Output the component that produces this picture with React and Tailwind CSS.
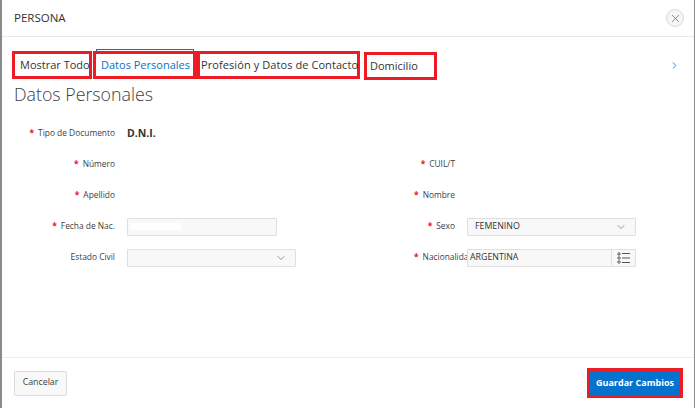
import { ChevronDown, ChevronRight, X } from 'lucide-react';

const Star = () => <span className="text-[#e8132b] font-bold mr-1">*</span>;

const Field = ({ label, required, clipped, children }) => (
  <div className="flex items-center h-[31px]">
    <div className={clipped
      ? 'w-[122px] shrink-0 flex justify-start pl-[69px] overflow-hidden whitespace-nowrap text-[#404040] text-[8.4px]'
      : 'w-[122px] shrink-0 flex justify-end pr-3 whitespace-nowrap text-[#404040] text-[8.4px]'}>
      {required && <Star />}
      <span>{label}</span>
    </div>
    {children}
  </div>
);

const inputBox = 'h-[18px] bg-[#f8f8f8] border border-[#dfdfdf] rounded-[1px] flex items-center';

const ListIcon = () => (
  <svg width="14" height="12" viewBox="0 0 14 12" fill="none" stroke="#555" strokeWidth="1">
    <circle cx="2" cy="2" r="1.2" />
    <circle cx="2" cy="6" r="1.2" />
    <circle cx="2" cy="10" r="1.2" />
    <path d="M5 1.5h8M5 6h8M5 10.5h8" />
  </svg>
);

const tabBase = 'h-7 border-[3px] border-[#ed1c24] flex items-center whitespace-nowrap text-[11px]';

export default function App() {
  return (
    <div className="w-[695px] h-[408px] bg-white border-l-2 border-r border-[#8a8a8a] flex flex-col overflow-hidden text-[8.8px] text-[#404040]" style={{ fontFamily: '"Open Sans", "Noto Sans", sans-serif' }}>
      {/* Header */}
      <div className="h-[37px] shrink-0 border-b border-[#e8e8e8] flex items-center justify-between pl-3 pr-[10px]">
        <span className="text-[11.5px] text-[#333]">PERSONA</span>
        <button className="w-[18px] h-[18px] rounded-full border border-[#d8d8d8] bg-[#f6f6f6] flex items-center justify-center">
          <X size={13} strokeWidth={1.2} color="#555" />
        </button>
      </div>

      {/* Tabs */}
      <div className="flex items-center pt-[13px] pl-[10px] pr-[14px] relative">
        <div className={`${tabBase} w-[80px] pl-[5px] text-[#333]`}>Mostrar Todo</div>
        <div className={`${tabBase} w-[104px] ml-px pl-[5px] text-[#0572ce] relative`}>
          Datos Personales
          <span className="absolute -top-[5px] left-0 right-0 h-[2px] border-t border-l border-r border-[#0572ce]" />
          <span className="absolute top-0 bottom-0 right-0 w-px bg-[#0572ce]" />
        </div>
        <div className={`${tabBase} w-[163px] pl-px text-[#333] tracking-[0.08px]`}>Profesión y Datos de Contacto</div>
        <div className={`${tabBase} w-[73px] ml-1 mt-0.5 pl-[3px] text-[#333]`}>Domicilio</div>
        <ChevronRight size={11} strokeWidth={2} color="#1a7fe0" className="ml-auto" />
      </div>

      <div className="pl-3 pt-px text-[17.8px] leading-[26px] text-[#404040] font-light">Datos Personales</div>

      {/* Form */}
      <div className="grid grid-cols-[340px_1fr] pl-[3px] pt-[11px]">
        <Field label="Tipo de Documento" required>
          <span className="text-[10.5px] font-bold text-[#333]">D.N.I.</span>
        </Field>
        <div />
        <Field label="Número" required />
        <Field label="CUIL/T" required />
        <Field label="Apellido" required />
        <Field label="Nombre" required />
        <Field label="Fecha de Nac." required>
          <div className={`${inputBox} w-[150px] pl-[2px]`}>
            <span className="w-[51px] h-[7px] bg-white" />
          </div>
        </Field>
        <Field label="Sexo" required>
          <div className={`${inputBox} w-[169px] justify-between pl-[7px] pr-2 text-[#333]`}>
            <span>FEMENINO</span>
            <ChevronDown size={12} strokeWidth={1.2} color="#555" />
          </div>
        </Field>
        <Field label="Estado Civil">
          <div className={`${inputBox} w-[169px] justify-end pr-2`}>
            <ChevronDown size={12} strokeWidth={1.2} color="#555" />
          </div>
        </Field>
        <Field label="Nacionalidad" required clipped>
          <div className={`${inputBox} w-[169px] justify-between pl-[2px] text-[#333]`}>
            <span>ARGENTINA</span>
            <span className="w-6 h-full border-l border-[#dfdfdf] flex items-center justify-center">
              <ListIcon />
            </span>
          </div>
        </Field>
      </div>

      {/* Footer */}
      <div className="mt-auto h-[51px] shrink-0 border-t border-[#ececec] flex items-center justify-between pl-3 pr-[11px]">
        <button className="w-[53px] h-[25px] bg-[#f8f8f8] border border-[#dcdcdc] rounded-[2px] text-[#404040]">Cancelar</button>
        <button className="w-[96px] h-[30px] bg-[#0572ce] border-[3px] border-[#ed1c24] text-white font-bold text-[9px]">Guardar Cambios</button>
      </div>
    </div>
  );
}
